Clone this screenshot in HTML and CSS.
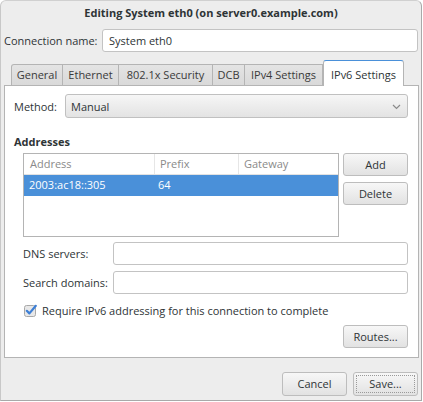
FILE: index.html
```html
<!DOCTYPE html>
<html>
<head>
<meta charset="utf-8">
<link rel="stylesheet" href="styles.css">
</head>
<body>
<div class="window">
  <div class="titlebar">Editing System eth0 (on server0.example.com)</div>
  <div class="conn-row">
    <span class="conn-label">Connection name:</span>
    <div class="entry conn-entry">System eth0</div>
  </div>
  <div class="tabs">
    <div class="tab t-general">General</div>
    <div class="tab t-ethernet">Ethernet</div>
    <div class="tab t-security">802.1x Security</div>
    <div class="tab t-dcb">DCB</div>
    <div class="tab t-ipv4">IPv4 Settings</div>
    <div class="tab t-ipv6 active">IPv6 Settings</div>
  </div>
  <div class="notebook">
    <div class="method-row">
      <span class="method-label">Method:</span>
      <div class="combo">
        <span>Manual</span>
        <svg class="chev" width="9" height="6" viewBox="0 0 9 6"><path d="M1 1 L4.5 4.5 L8 1" fill="none" stroke="#8a8a8a" stroke-width="1.2"/></svg>
      </div>
    </div>
    <div class="section-title">Addresses</div>
    <div class="addr-row">
      <div class="table">
        <div class="thead">
          <div class="c1">Address</div>
          <div class="c2">Prefix</div>
          <div class="c3">Gateway</div>
        </div>
        <div class="trow selected">
          <div class="c1">2003:ac18::305</div>
          <div class="c2">64</div>
          <div class="c3"></div>
        </div>
      </div>
      <div class="side-buttons">
        <div class="button">Add</div>
        <div class="button">Delete</div>
      </div>
    </div>
    <div class="field-row dns">
      <span class="field-label">DNS servers:</span>
      <div class="entry field-entry"></div>
    </div>
    <div class="field-row search">
      <span class="field-label">Search domains:</span>
      <div class="entry field-entry"></div>
    </div>
    <div class="check-row">
      <svg class="check" width="13" height="13" viewBox="0 0 13 13">
        <rect x="0.5" y="1.5" width="11" height="11" rx="2" fill="#e8e8e8" stroke="#a8a8a8"/>
        <path d="M2.8 6.8 L5.4 9.4 L11.8 1.8" fill="none" stroke="#3d7fd6" stroke-width="2.2" stroke-linecap="round" stroke-linejoin="round"/>
      </svg>
      <span>Require IPv6 addressing for this connection to complete</span>
    </div>
    <div class="routes-row">
      <div class="button routes">Routes...</div>
    </div>
  </div>
  <div class="dialog-buttons">
    <div class="button dlg">Cancel</div>
    <div class="button dlg save"><span class="focus">Save...</span></div>
  </div>
</div>
</body>
</html>
```

FILE: styles.css
```css
* { box-sizing: border-box; }
html, body { margin: 0; padding: 0; background: #ffffff; }
body {
  width: 423px;
  height: 402px;
  font-family: "Open Sans", "DejaVu Sans", sans-serif;
  font-size: 11px;
  color: #2e3436;
  white-space: nowrap;
}
.window {
  width: 422px;
  height: 401px;
  background: #ededed;
  border: 1px solid #a9a9a9;
  border-top-color: #d0d0d0;
  border-left-color: #c8c8c8;
  border-radius: 6px 6px 0 0;
  display: flex;
  flex-direction: column;
}
.titlebar {
  height: 28px;
  line-height: 24px;
  text-align: center;
  font-weight: bold;
  font-size: 11px;
  color: #2e3436;
}
.conn-row {
  display: flex;
  align-items: center;
  padding: 0 3px 0 3px;
  height: 23px;
}
.conn-label { width: 98px; }
.entry {
  background: #ffffff;
  border: 1px solid #c3c3c3;
  border-radius: 3px;
  height: 23px;
  line-height: 21px;
  padding: 0 6px;
}
.conn-entry { flex: 1; }
.tabs {
  display: flex;
  align-items: flex-end;
  margin-top: 8px;
  padding-left: 10px;
  height: 25px;
  position: relative;
  z-index: 1;
}
.tab {
  height: 21px;
  line-height: 20px;
  text-align: center;
  background: linear-gradient(#e4e4e4, #d9d9d9);
  border: 1px solid #b4b4b4;
  border-bottom: none;
  border-left: none;
  color: #3a3a3a;
}
.tab:first-child { border-left: 1px solid #b4b4b4; border-radius: 3px 0 0 0; }
.t-general { width: 52px; }
.t-ethernet { width: 56px; }
.t-security { width: 94px; }
.t-dcb { width: 32px; }
.t-ipv4 { width: 78px; }
.t-ipv6 { width: 81px; }
.tab.active {
  height: 26px;
  margin-bottom: -1px;
  line-height: 27px;
  background: #ffffff;
  border: 1px solid #b4b4b4;
  border-top: 1px solid #4a90d9;
  border-bottom: none;
  border-radius: 3px 3px 0 0;
  color: #2e3436;
}
.notebook {
  margin-left: 3px;
  width: 415px;
  height: 273px;
  background: #ffffff;
  border: 1px solid #b4b4b4;
  padding: 8px 10px 0 9px;
}
.method-row {
  display: flex;
  align-items: center;
  height: 24px;
}
.method-label { width: 51px; }
.combo {
  flex: 1;
  height: 24px;
  border: 1px solid #c0c0c0;
  border-radius: 3px;
  background: linear-gradient(#f6f6f6, #e3e3e3);
  display: flex;
  align-items: center;
  justify-content: space-between;
  padding: 0 6px 0 5px;
}
.chev { margin-top: 1px; }
.section-title {
  font-weight: bold;
  margin-top: 16px;
  height: 18px;
  line-height: 16px;
}
.addr-row {
  display: flex;
  padding-left: 9px;
  margin-top: 1px;
}
.table {
  width: 316px;
  height: 84px;
  border: 1px solid #b4b4b4;
  background: #ffffff;
}
.thead, .trow { display: flex; }
.thead {
  height: 21px;
  line-height: 20px;
  color: #8a8a8a;
  border-bottom: 1px solid #e2e2e2;
}
.thead .c1, .thead .c2 { border-right: 1px solid #e6e6e6; }
.c1 { width: 131px; padding-left: 6px; }
.c2 { width: 84px; padding-left: 5px; }
.c3 { flex: 1; padding-left: 5px; }
.trow {
  height: 21px;
  line-height: 20px;
}
.trow.selected { background: #4a90d9; color: #ffffff; }
.trow.selected .c1 { padding-left: 5px; }
.trow.selected .c2 { padding-left: 3px; }
.side-buttons {
  margin-left: 4px;
  display: flex;
  flex-direction: column;
  gap: 6px;
}
.button {
  width: 65px;
  height: 23px;
  line-height: 21px;
  text-align: center;
  border: 1px solid #bdbdbd;
  border-radius: 3px;
  background: linear-gradient(#f7f7f7, #e2e2e2);
  color: #2e3436;
}
.field-row {
  display: flex;
  align-items: center;
  padding-left: 9px;
  height: 23px;
}
.field-row.dns { margin-top: 5px; }
.field-row.search { margin-top: 6px; }
.field-label { width: 90px; }
.field-entry { flex: 1; height: 23px; }
.check-row {
  display: flex;
  align-items: center;
  padding-left: 10px;
  margin-top: 8px;
  height: 16px;
  gap: 5px;
}
.routes-row {
  display: flex;
  justify-content: flex-end;
  margin-top: 7px;
}
.routes { height: 23px; }
.dialog-buttons {
  display: flex;
  justify-content: flex-end;
  gap: 6px;
  padding-right: 3px;
  margin-top: 14px;
}
.dlg { width: 65px; height: 24px; line-height: 22px; }
.save { padding: 2px; }
.focus {
  display: block;
  border: 1px dotted #9a9a9a;
  height: 18px;
  line-height: 16px;
}
```
